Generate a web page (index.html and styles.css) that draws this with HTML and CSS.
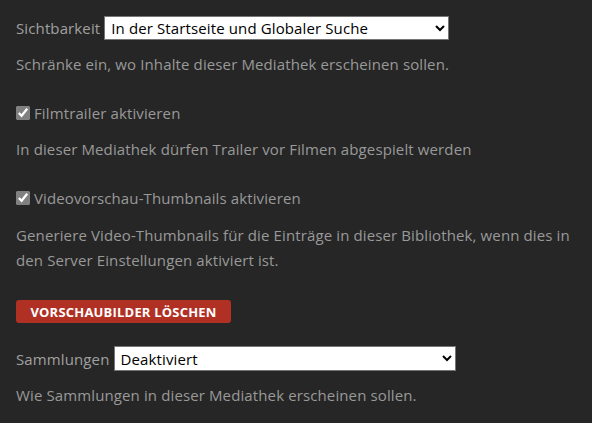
FILE: index.html
```html
<!DOCTYPE html>
<html lang="de">
<head>
  <meta charset="UTF-8" />
  <title>Mediathek Einstellungen</title>
  <link rel="stylesheet" href="styles.css">
</head>
<body>

  <div class="settings">
    <div class="field">
      <label class="select-label" for="visibility">Sichtbarkeit</label>
      <select id="visibility" class="select-visibility">
        <option>In der Startseite und Globaler Suche</option>
      </select>
    </div>
    <p class="hint">Schränke ein, wo Inhalte dieser Mediathek erscheinen sollen.</p>

    <label class="check">
      <input type="checkbox" checked>Filmtrailer aktivieren
    </label>
    <p class="hint">In dieser Mediathek dürfen Trailer vor Filmen abgespielt werden</p>

    <label class="check">
      <input type="checkbox" checked>Videovorschau-Thumbnails aktivieren
    </label>
    <p class="hint hint-long">Generiere Video-Thumbnails für die Einträge in dieser Bibliothek, wenn dies in den Server Einstellungen aktiviert ist.</p>

    <button class="btn-clear">Vorschaubilder löschen</button>

    <div class="field field-collections">
      <label class="select-label" for="collections">Sammlungen</label>
      <select id="collections" class="select-collections">
        <option>Deaktiviert</option>
      </select>
    </div>
    <p class="hint">Wie Sammlungen in dieser Mediathek erscheinen sollen.</p>
  </div>

</body>
</html>
```

FILE: styles.css
```css
body {
  font-family: 'Open Sans', sans-serif;
  background-color: #262626;
  color: #999;
  margin: 0;
  padding: 0;
  letter-spacing: 0.12px;
}

.settings {
  padding: 16px 16px 0;
  width: 560px;
}

.field {
  display: flex;
  align-items: center;
  height: 24px;
}

.field-collections {
  height: 25px;
  margin-top: 23px;
}

.select-label {
  font-size: 15px;
  color: #a0a0a0;
  margin-right: 4px;
}

select {
  font-family: 'Open Sans', sans-serif;
  font-size: 15px;
  letter-spacing: 0.12px;
  color: #000;
  background-color: #fff;
  border: 1px solid #767676;
  height: 24px;
  padding: 0 2px;
}

.select-visibility {
  width: 345px;
}

.select-collections {
  width: 342px;
  height: 25px;
}

.hint {
  font-size: 15px;
  line-height: 25px;
  margin: 12px 0 24px;
}

.hint-long {
  margin-top: 13px;
  margin-bottom: 27px;
}

.check {
  display: flex;
  align-items: center;
  font-size: 15px;
  height: 24px;
}

.check input {
  accent-color: #808080;
  width: 14px;
  height: 14px;
  margin: 0 4px 0 0;
}

.btn-clear {
  display: block;
  font-family: 'Open Sans', sans-serif;
  font-weight: bold;
  font-size: 13px;
  letter-spacing: 0.2px;
  text-transform: uppercase;
  background-color: #b03024;
  color: #fff;
  border: none;
  border-radius: 3px;
  width: 215px;
  height: 23px;
  padding: 0;
  margin: 0;
}
```
